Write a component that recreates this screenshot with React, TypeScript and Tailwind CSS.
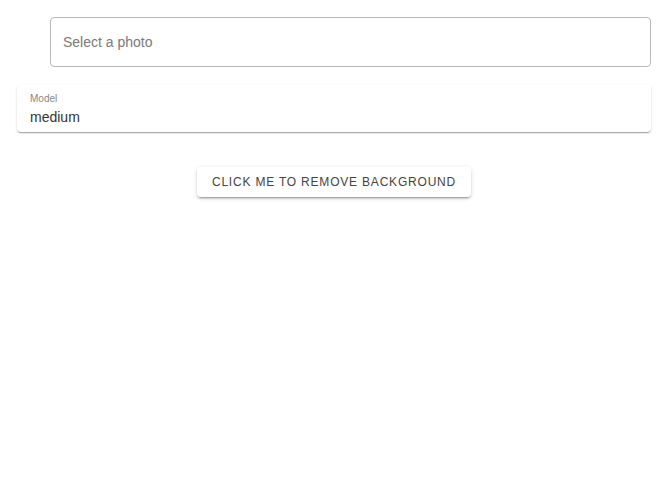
import React from 'react';

export default function App() {
  return (
    <div className="min-h-[501px] bg-white px-[17px] pt-[17px] font-['Liberation_Sans',Arial,sans-serif]">
      {/* Photo picker */}
      <div className="ml-[33px]">
        <div className="flex h-[50px] items-center rounded-[4px] border border-[#b9b9b9] px-[12px]">
          <span className="text-[14px] text-[#7a7a7a]">Select a photo</span>
        </div>
      </div>

      {/* Model select */}
      <div className="mt-[18px] h-[47px] rounded-[4px] bg-white px-[13px] pt-[8px] shadow-[0_2px_1px_-1px_rgba(0,0,0,0.2),0_1px_1px_0_rgba(0,0,0,0.14),0_1px_3px_0_rgba(0,0,0,0.12)]">
        <div className="text-[10px] leading-[12px] text-[#888]">Model</div>
        <div className="mt-[3px] text-[14px] leading-[18px] text-[#333]">medium</div>
      </div>

      {/* Action */}
      <div className="mt-[35px] flex justify-center">
        <button className="h-[30px] w-[274px] rounded-[4px] bg-white text-[12px] tracking-[0.8px] text-[#444] shadow-[0_3px_1px_-2px_rgba(0,0,0,0.2),0_2px_2px_0_rgba(0,0,0,0.14),0_1px_5px_0_rgba(0,0,0,0.12)]">
          CLICK ME TO REMOVE BACKGROUND
        </button>
      </div>
    </div>
  );
}
